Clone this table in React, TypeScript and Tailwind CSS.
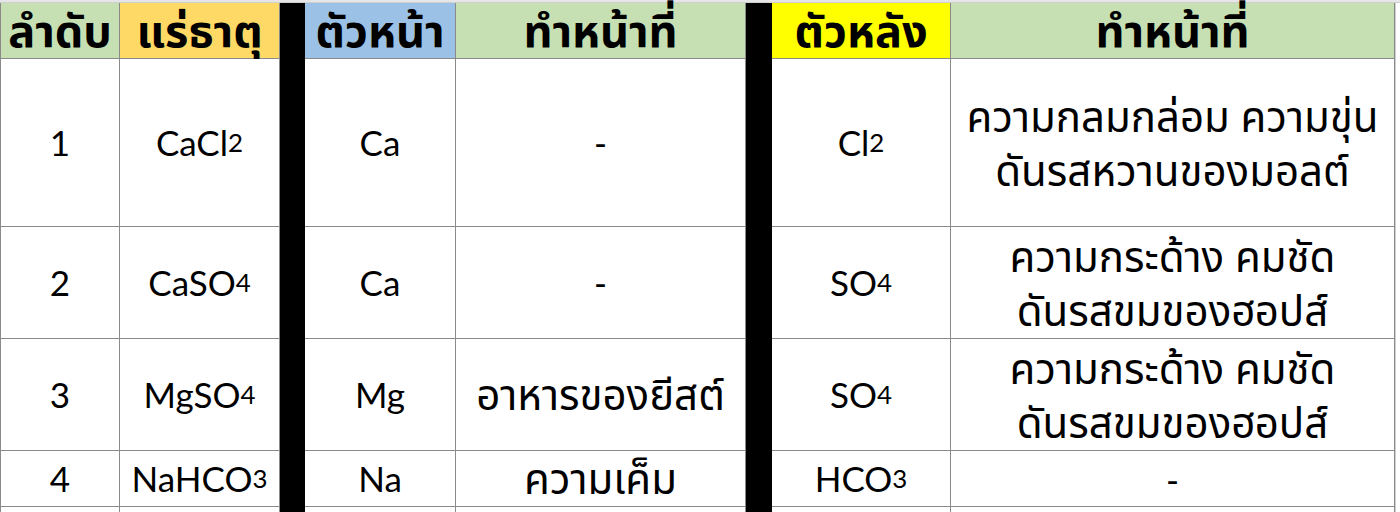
import React from "react";

type Cell = React.ReactNode;

const Sub = ({ children }: { children: React.ReactNode }) => (
  <span className="text-[0.74em]">{children}</span>
);

// Thai text needs a larger size to match the spreadsheet's Thai glyph size
const Th = ({ children }: { children: React.ReactNode }) => (
  <span className="text-[42px]">{children}</span>
);

const rows: { h: string; no: string; mineral: Cell; front: string; frontRole: Cell; back: Cell; backRole: string[] }[] = [
  {
    h: "h-[168px]",
    no: "1",
    mineral: <>CaCl<Sub>2</Sub></>,
    front: "Ca",
    frontRole: "-",
    back: <>Cl<Sub>2</Sub></>,
    backRole: ["ความกลมกล่อม ความขุ่น", "ดันรสหวานของมอลต์"],
  },
  {
    h: "h-[112px]",
    no: "2",
    mineral: <>CaSO<Sub>4</Sub></>,
    front: "Ca",
    frontRole: "-",
    back: <>SO<Sub>4</Sub></>,
    backRole: ["ความกระด้าง คมชัด", "ดันรสขมของฮอปส์"],
  },
  {
    h: "h-[112px]",
    no: "3",
    mineral: <>MgSO<Sub>4</Sub></>,
    front: "Mg",
    frontRole: <Th>อาหารของยีสต์</Th>,
    back: <>SO<Sub>4</Sub></>,
    backRole: ["ความกระด้าง คมชัด", "ดันรสขมของฮอปส์"],
  },
  {
    h: "h-[56px]",
    no: "4",
    mineral: <>NaHCO<Sub>3</Sub></>,
    front: "Na",
    frontRole: <Th>ความเค็ม</Th>,
    back: <>HCO<Sub>3</Sub></>,
    backRole: ["-"],
  },
];

const cell = "flex items-center justify-center text-center border-r border-b border-[#8a8a8a]";

export default function App() {
  return (
    <div
      className="w-[1400px] h-[512px] overflow-hidden bg-[#e6e6e6] text-black"
      style={{ fontFamily: '"Lato", "Noto Sans Thai", "Noto Sans", Tahoma, sans-serif' }}
    >
      <div className="h-[3px] border-b border-[#cfcfcf]" />
      <div className="flex">
        <div className="w-[1395px] border-l border-[#8a8a8a] bg-white">
          {/* header */}
          <div className="flex h-[56px] text-[45px] leading-none font-bold">
            <div className={`${cell} w-[119px] bg-[#c6e0b4] border-[#6e6e6e]`}>ลำดับ</div>
            <div className={`${cell} w-[160px] bg-[#ffd966] border-[#6e6e6e]`}>แร่ธาตุ</div>
            <div className="w-[25px] bg-black" />
            <div className={`${cell} w-[151px] bg-[#9bc2e6] border-[#6e6e6e]`}>ตัวหน้า</div>
            <div className={`${cell} w-[290px] bg-[#c6e0b4] border-[#6e6e6e]`}>ทำหน้าที่</div>
            <div className="w-[26px] bg-black" />
            <div className={`${cell} w-[179px] bg-[#ffff00] border-[#6e6e6e]`}>ตัวหลัง</div>
            <div className={`${cell} flex-1 bg-[#c6e0b4] border-[#6e6e6e]`}>ทำหน้าที่</div>
          </div>
          {rows.map((r) => (
            <div key={r.no} className={`flex ${r.h} text-[35px]`}>
              <div className={`${cell} w-[119px]`}>{r.no}</div>
              <div className={`${cell} w-[160px]`}>{r.mineral}</div>
              <div className="w-[25px] bg-black" />
              <div className={`${cell} w-[151px]`}>{r.front}</div>
              <div className={`${cell} w-[290px]`}>{r.frontRole}</div>
              <div className="w-[26px] bg-black" />
              <div className={`${cell} w-[179px]`}>{r.back}</div>
              <div className={`${cell} flex-1 flex-col leading-[54px]`}>
                {r.backRole.map((l) =>
                  l === "-" ? (
                    <div key={l}>{l}</div>
                  ) : (
                    <div key={l} className="text-[42px]">{l}</div>
                  )
                )}
              </div>
            </div>
          ))}
          <div className="flex h-[20px]">
            <div className="w-[119px] border-r border-[#8a8a8a]" />
            <div className="w-[160px] border-r border-[#8a8a8a]" />
            <div className="w-[25px] bg-black" />
            <div className="w-[151px] border-r border-[#8a8a8a]" />
            <div className="w-[290px] border-r border-[#8a8a8a]" />
            <div className="w-[26px] bg-black" />
            <div className="w-[179px] border-r border-[#8a8a8a]" />
            <div className="flex-1 border-r border-[#8a8a8a]" />
          </div>
        </div>
        <div className="flex-1 bg-white border-l border-[#d0d0d0]" />
      </div>
    </div>
  );
}
